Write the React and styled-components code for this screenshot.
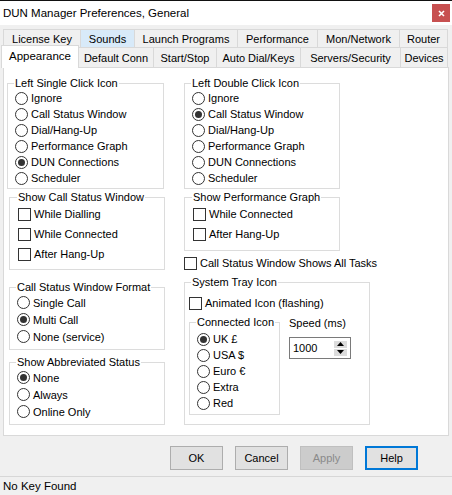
import React from 'react'
import styled, { createGlobalStyle } from 'styled-components'

const GlobalStyle = createGlobalStyle`
  html, body {
    margin: 0;
    padding: 0;
    background: #f0f0f0;
  }
  body {
    font-family: "Liberation Sans", Arial, sans-serif;
    font-size: 11px;
    color: #000;
  }
`

const tabsTop = [
  { label: 'License Key', w: 78, first: true },
  { label: 'Sounds', w: 54, hover: true },
  { label: 'Launch Programs', w: 103 },
  { label: 'Performance', w: 80 },
  { label: 'Mon/Network', w: 82 },
  { label: 'Router', w: 48 },
]

const tabsBottom = [
  { label: 'Default Conn', w: 75 },
  { label: 'Start/Stop', w: 63 },
  { label: 'Auto Dial/Keys', w: 84 },
  { label: 'Servers/Security', w: 100 },
  { label: 'Devices', w: 47 },
]

const clickOptions = ['Ignore', 'Call Status Window', 'Dial/Hang-Up', 'Performance Graph', 'DUN Connections', 'Scheduler']

function Radio({ on, label, h }) {
  return (
    <Option $h={h}>
      <RadioDot $on={on} />
      <span>{label}</span>
    </Option>
  )
}

function Check({ label, h }) {
  return (
    <Option $h={h}>
      <CheckBox />
      <span>{label}</span>
    </Option>
  )
}

function App() {
  return (
    <Window>
      <GlobalStyle />
      <TitleBar>
        <Title>DUN Manager Preferences, General</Title>
        <CloseButton>
          <svg width="7" height="7" viewBox="0 0 7 7">
            <path d="M1 1 L6 6 M6 1 L1 6" stroke="#fff" strokeWidth="1.6" />
          </svg>
        </CloseButton>
      </TitleBar>

      <Body>
        <TabRow $h={18}>
          {tabsTop.map((t) => (
            <Tab key={t.label} $w={t.w} $first={t.first} $hover={t.hover}>{t.label}</Tab>
          ))}
        </TabRow>
        <TabRow $h={20}>
          <ActiveTab>Appearance</ActiveTab>
          {tabsBottom.map((t) => (
            <Tab key={t.label} $w={t.w}>{t.label}</Tab>
          ))}
        </TabRow>

        <Panel>
          <Column $w={177}>
            <Group $w={157} $mt={8} $pl={7} $pb={2}>
              <Legend>Left Single Click Icon</Legend>
              {clickOptions.map((o) => (
                <Radio key={o} label={o} h={16} on={o === 'DUN Connections'} />
              ))}
            </Group>
            <Group $w={156} $mt={1} $ml={2} $pl={8} $pb={5}>
              <Legend>Show Call Status Window</Legend>
              <Check label="While Dialling" h={20} />
              <Check label="While Connected" h={20} />
              <Check label="After Hang-Up" h={20} />
            </Group>
            <Group $w={156} $mt={10} $ml={2} $pl={7} $pb={4}>
              <Legend>Call Status Window Format</Legend>
              <Radio label="Single Call" h={17} />
              <Radio label="Multi Call" h={17} on />
              <Radio label="None (service)" h={17} />
            </Group>
            <Group $w={156} $mt={5} $ml={2} $pl={7} $pb={4}>
              <Legend>Show Abbreviated Status</Legend>
              <Radio label="None" h={17} on />
              <Radio label="Always" h={17} />
              <Radio label="Online Only" h={17} />
            </Group>
          </Column>

          <Column>
            <Group $w={156} $mt={8} $pl={7} $pb={2}>
              <Legend>Left Double Click Icon</Legend>
              {clickOptions.map((o) => (
                <Radio key={o} label={o} h={16} on={o === 'Call Status Window'} />
              ))}
            </Group>
            <Group $w={156} $mt={1} $pl={8} $pb={6}>
              <Legend>Show Performance Graph</Legend>
              <Check label="While Connected" h={20} />
              <Check label="After Hang-Up" h={20} />
            </Group>
            <TaskRow>
              <Check label="Call Status Window Shows All Tasks" h={20} />
            </TaskRow>
            <Group $w={186} $mt={2} $pl={4} $pb={9} $lm={3}>
              <Legend>System Tray Icon</Legend>
              <AnimatedRow>
                <Check label="Animated Icon (flashing)" h={20} />
              </AnimatedRow>
              <TrayRow>
                <Group $w={91} $pl={7} $pt={2} $pb={3}>
                  <Legend>Connected Icon</Legend>
                  <Radio label="UK £" h={16} on />
                  <Radio label="USA $" h={16} />
                  <Radio label="Euro €" h={16} />
                  <Radio label="Extra" h={16} />
                  <Radio label="Red" h={16} />
                </Group>
                <SpeedBlock>
                  <SpeedLabel>Speed (ms)</SpeedLabel>
                  <SpinBox>
                    <span>1000</span>
                    <Spinner>
                      <SpinButton>
                        <svg width="7" height="4" viewBox="0 0 7 4"><path d="M3.5 0 L7 4 L0 4 Z" fill="#000" /></svg>
                      </SpinButton>
                      <SpinButton>
                        <svg width="7" height="4" viewBox="0 0 7 4"><path d="M0 0 L7 0 L3.5 4 Z" fill="#000" /></svg>
                      </SpinButton>
                    </Spinner>
                  </SpinBox>
                </SpeedBlock>
              </TrayRow>
            </Group>
          </Column>
        </Panel>
      </Body>

      <ButtonRow>
        <Button>OK</Button>
        <Button>Cancel</Button>
        <Button $disabled>Apply</Button>
        <Button $default>Help</Button>
      </ButtonRow>

      <StatusBar>No Key Found</StatusBar>
    </Window>
  )
}

export default App

const Window = styled.div`
  width: 452px;
  height: 495px;
  display: flex;
  flex-direction: column;
  overflow: hidden;
  background: #f0f0f0;
`

const TitleBar = styled.div`
  box-sizing: border-box;
  height: 25px;
  display: flex;
  align-items: center;
  justify-content: space-between;
  padding: 0 2px 0 3px;
  border-top: 1px solid #111;
  background: #fff;
`

const Title = styled.div`
  font-size: 11.5px;
`

const CloseButton = styled.div`
  width: 18px;
  height: 18px;
  display: flex;
  align-items: center;
  justify-content: center;
  background: #c75050;
`

const Body = styled.div`
  padding: 4px 3px 0;
`

const TabRow = styled.div`
  display: flex;
  align-items: flex-start;
  height: ${(p) => p.$h}px;
`

const Tab = styled.div`
  box-sizing: border-box;
  width: ${(p) => p.$w}px;
  height: 100%;
  display: flex;
  align-items: center;
  justify-content: center;
  white-space: nowrap;
  border: 1px solid #d9d9d9;
  border-bottom: none;
  border-left: ${(p) => (p.$first ? '1px solid #d9d9d9' : 'none')};
  background: ${(p) => (p.$hover ? '#d8eaf9' : '#f0f0f0')};
`

const ActiveTab = styled.div`
  position: relative;
  z-index: 1;
  box-sizing: border-box;
  width: 78px;
  height: 23px;
  margin: -2px 0 0 -2px;
  padding-bottom: 3px;
  display: flex;
  align-items: center;
  justify-content: center;
  border: 1px solid #d9d9d9;
  border-bottom: none;
  background: #fff;
  font-size: 11.5px;
`

const Panel = styled.div`
  box-sizing: border-box;
  height: 369px;
  display: flex;
  padding-left: 3px;
  border: 1px solid #d9d9d9;
  background: #fff;
`

const Column = styled.div`
  display: flex;
  flex-direction: column;
  align-items: flex-start;
  width: ${(p) => (p.$w ? `${p.$w}px` : 'auto')};
  flex-shrink: 0;
`

const Group = styled.fieldset`
  box-sizing: border-box;
  width: ${(p) => p.$w}px;
  min-width: 0;
  margin: ${(p) => p.$mt || 0}px 0 0 ${(p) => p.$ml || 0}px;
  padding: ${(p) => p.$pt || 0}px 0 ${(p) => p.$pb || 0}px ${(p) => p.$pl || 0}px;
  border: 1px solid #dcdcdc;
  flex-shrink: 0;

  & > legend {
    margin-left: ${(p) => (p.$lm || 0) - 1}px;
  }
`

const Legend = styled.legend`
  padding: 0 1px;
  line-height: 14px;
  font-size: 11px;
`

const Option = styled.label`
  display: flex;
  align-items: center;
  gap: 3px;
  height: ${(p) => p.$h}px;
  white-space: nowrap;
`

const RadioDot = styled.span`
  box-sizing: border-box;
  width: 13px;
  height: 13px;
  flex-shrink: 0;
  display: flex;
  align-items: center;
  justify-content: center;
  border: 1px solid #333;
  border-radius: 50%;
  background: #fff;

  &::after {
    content: '';
    display: ${(p) => (p.$on ? 'block' : 'none')};
    width: 7px;
    height: 7px;
    border-radius: 50%;
    background: #333;
  }
`

const CheckBox = styled.span`
  box-sizing: border-box;
  width: 13px;
  height: 13px;
  flex-shrink: 0;
  border: 1px solid #333;
  background: #fff;
`

const TaskRow = styled.div`
  margin-top: 2px;
`

const AnimatedRow = styled.div`
  margin-top: 4px;
`

const TrayRow = styled.div`
  display: flex;
  align-items: flex-start;
  margin-top: 2px;
`

const SpeedBlock = styled.div`
  display: flex;
  flex-direction: column;
  margin-left: 9px;
`

const SpeedLabel = styled.div`
  margin-top: 1px;
  line-height: 14px;
`

const SpinBox = styled.div`
  box-sizing: border-box;
  width: 62px;
  height: 22px;
  margin-top: 7px;
  display: flex;
  align-items: center;
  padding: 0 3px 0 3px;
  border: 1px solid #7a7a7a;
  background: #fff;
`

const Spinner = styled.div`
  margin-left: auto;
  display: flex;
  flex-direction: column;
  gap: 1px;
`

const SpinButton = styled.div`
  width: 13px;
  height: 7px;
  display: flex;
  align-items: center;
  justify-content: center;
  background: #dcdcdc;
`

const ButtonRow = styled.div`
  box-sizing: border-box;
  height: 40px;
  display: flex;
  justify-content: flex-end;
  align-items: flex-start;
  gap: 12px;
  padding: 10px 34px 0 0;
`

const Button = styled.button`
  box-sizing: border-box;
  width: 53px;
  height: 24px;
  padding: 0;
  font-family: "Liberation Sans", Arial, sans-serif;
  font-size: 11px;
  color: ${(p) => (p.$disabled ? '#8a8a8a' : '#000')};
  background: ${(p) => (p.$disabled ? '#cccccc' : '#e1e1e1')};
  border: ${(p) => (p.$default ? '2px solid #0078d7' : p.$disabled ? '1px solid #bfbfbf' : '1px solid #adadad')};
`

const StatusBar = styled.div`
  flex: 1;
  display: flex;
  align-items: center;
  padding-left: 3px;
  border-top: 1px solid #d7d7d7;
  font-size: 11.5px;
`
